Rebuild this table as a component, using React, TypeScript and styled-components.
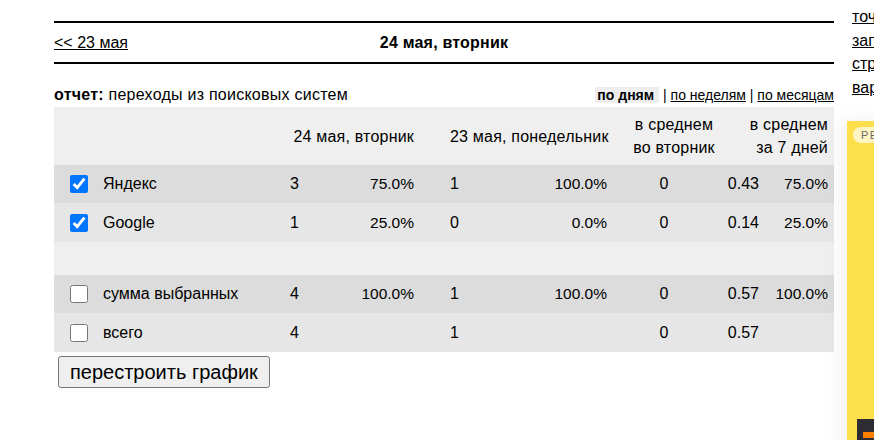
import React from "react";
import styled, { createGlobalStyle } from "styled-components";

const GlobalStyle = createGlobalStyle`
  html, body {
    margin: 0;
    padding: 0;
    overflow: hidden;
    background: #fff;
  }
  body {
    font-family: "Liberation Sans", Arial, sans-serif;
    color: #000;
  }
`;

const Page = styled.div`
  display: flex;
  align-items: flex-start;
  width: 874px;
  height: 440px;
  padding-left: 54px;
  box-sizing: border-box;
  overflow: hidden;
`;

const Main = styled.div`
  width: 780px;
  flex-shrink: 0;
  padding-top: 21px;
`;

const NavBar = styled.div`
  display: grid;
  grid-template-columns: 1fr auto 1fr;
  align-items: center;
  height: 39px;
  border-top: 2px solid #000;
  border-bottom: 2px solid #000;
  font-size: 16px;
`;

const PrevLink = styled.a`
  color: #000;
  text-decoration: underline;
  justify-self: start;
  cursor: pointer;
`;

const DayTitle = styled.div`
  font-weight: bold;
  letter-spacing: 0.2px;
`;

const ReportBar = styled.div`
  display: flex;
  justify-content: space-between;
  align-items: flex-end;
  height: 43px;
  padding-bottom: 3px;
  box-sizing: border-box;
`;

const ReportTitle = styled.div`
  font-size: 16px;
  line-height: 18px;
  letter-spacing: 0.25px;
  b {
    font-weight: bold;
  }
`;

const PeriodSwitch = styled.div`
  font-size: 14px;
  line-height: 16px;
  padding-bottom: 1px;
`;

const PeriodCurrent = styled.span`
  font-weight: bold;
  background: #eeeeee;
  padding: 0 5px 0 2px;
`;

const PeriodLink = styled.a`
  color: #000;
  text-decoration: underline;
  cursor: pointer;
`;

const Table = styled.div`
  display: flex;
  flex-direction: column;
`;

const COLUMNS = "236px 70px 90px 70px 87px 114px 38px 69px";

const Row = styled.div<{ $bg: string; $h: number }>`
  display: grid;
  grid-template-columns: ${COLUMNS};
  padding-right: 6px;
  align-items: center;
  height: ${(p) => p.$h}px;
  background: ${(p) => p.$bg};
  font-size: 16px;
`;

const HeadCell = styled.div<{ $span?: number; $align?: string; $pr?: number; $pl?: number }>`
  grid-column: span ${(p) => p.$span ?? 1};
  text-align: ${(p) => p.$align ?? "right"};
  padding-right: ${(p) => p.$pr ?? 0}px;
  padding-left: ${(p) => p.$pl ?? 0}px;
  line-height: 23px;
  letter-spacing: 0.2px;
  white-space: nowrap;
`;

const LabelCell = styled.label`
  display: flex;
  align-items: center;
  gap: 15px;
  padding-left: 16px;
`;

const Checkbox = styled.input`
  width: 18px;
  height: 18px;
  margin: 0;
  accent-color: #0075ff;
`;

const Cell = styled.div<{ $align?: string; $pr?: number; $small?: boolean }>`
  text-align: ${(p) => p.$align ?? "left"};
  padding-right: ${(p) => p.$pr ?? 0}px;
  font-size: ${(p) => (p.$small ? 15.5 : 16)}px;
  white-space: nowrap;
`;

const RebuildButton = styled.button`
  margin: 4px 0 0 4px;
  height: 32px;
  padding: 0 11px;
  font-family: "Liberation Sans", Arial, sans-serif;
  font-size: 20px;
  color: #000;
  background: #efefef;
  border: 1px solid #767676;
  border-radius: 3px;
`;

const Sidebar = styled.div`
  flex-shrink: 0;
  width: 220px;
  margin-left: 13px;
`;

const SideLinks = styled.div`
  display: flex;
  flex-direction: column;
  padding: 5px 0 0 5px;
  font-size: 16px;
  line-height: 23.5px;
  white-space: nowrap;
`;

const SideLink = styled.a`
  color: #000;
  text-decoration: underline;
  cursor: pointer;
`;

const AdPanel = styled.div`
  margin-top: 22px;
  height: 330px;
  background: #fcdf4b;
  box-shadow: -6px 0 18px rgba(0, 0, 0, 0.06);
  padding: 6px 0 0 6px;
  box-sizing: border-box;
  display: flex;
  flex-direction: column;
  justify-content: space-between;
`;

const AdBadge = styled.div`
  align-self: flex-start;
  background: #fff4c4;
  color: #6b6b6b;
  font-size: 11px;
  letter-spacing: 1.5px;
  line-height: 16px;
  padding: 0 8px;
  border-radius: 8px;
`;

const AdCard = styled.div`
  margin-left: 4px;
  height: 32px;
  background: #2d2c33;
  padding: 13px 0 0 6px;
  box-sizing: border-box;
`;

const AdButton = styled.div`
  width: 60px;
  height: 6px;
  background: #ff7f00;
`;

type DataItem = {
  label: string;
  checked: boolean;
  c1: string;
  p1: string;
  c2: string;
  p2: string;
  avgDay: string;
  avgWeek: string;
  pWeek: string;
  bg: string;
  h: number;
};

const rowsTop: DataItem[] = [
  { label: "Яндекс", checked: true, c1: "3", p1: "75.0%", c2: "1", p2: "100.0%", avgDay: "0", avgWeek: "0.43", pWeek: "75.0%", bg: "#dcdcdc", h: 38 },
  { label: "Google", checked: true, c1: "1", p1: "25.0%", c2: "0", p2: "0.0%", avgDay: "0", avgWeek: "0.14", pWeek: "25.0%", bg: "#e6e6e6", h: 39 },
];

const rowsBottom: DataItem[] = [
  { label: "сумма выбранных", checked: false, c1: "4", p1: "100.0%", c2: "1", p2: "100.0%", avgDay: "0", avgWeek: "0.57", pWeek: "100.0%", bg: "#dcdcdc", h: 38 },
  { label: "всего", checked: false, c1: "4", p1: "", c2: "1", p2: "", avgDay: "0", avgWeek: "0.57", pWeek: "", bg: "#e6e6e6", h: 39 },
];

const DataRow: React.FC<{ item: DataItem }> = ({ item }) => (
  <Row $bg={item.bg} $h={item.h}>
    <LabelCell>
      <Checkbox type="checkbox" defaultChecked={item.checked} />
      <span>{item.label}</span>
    </LabelCell>
    <Cell>{item.c1}</Cell>
    <Cell $align="right" $pr={36} $small>{item.p1}</Cell>
    <Cell>{item.c2}</Cell>
    <Cell $align="right" $small>{item.p2}</Cell>
    <Cell $align="center">{item.avgDay}</Cell>
    <Cell $align="right">{item.avgWeek}</Cell>
    <Cell $align="right" $small>{item.pWeek}</Cell>
  </Row>
);

export default function App() {
  return (
    <>
      <GlobalStyle />
      <Page>
        <Main>
          <NavBar>
            <PrevLink>&lt;&lt; 23 мая</PrevLink>
            <DayTitle>24 мая, вторник</DayTitle>
            <span />
          </NavBar>
          <ReportBar>
            <ReportTitle>
              <b>отчет:</b> переходы из поисковых систем
            </ReportTitle>
            <PeriodSwitch>
              <PeriodCurrent>по дням</PeriodCurrent> | <PeriodLink>по неделям</PeriodLink> |{" "}
              <PeriodLink>по месяцам</PeriodLink>
            </PeriodSwitch>
          </ReportBar>
          <Table>
            <Row $bg="#efefef" $h={58}>
              <HeadCell />
              <HeadCell $span={2} $pr={36}>24 мая, вторник</HeadCell>
              <HeadCell $span={2}>23 мая, понедельник</HeadCell>
              <HeadCell $align="center" $pl={20}>
                в среднем
                <br />
                во вторник
              </HeadCell>
              <HeadCell $span={2}>
                в среднем
                <br />
                за 7 дней
              </HeadCell>
            </Row>
            {rowsTop.map((r) => (
              <DataRow key={r.label} item={r} />
            ))}
            <Row $bg="#efefef" $h={33} />
            {rowsBottom.map((r) => (
              <DataRow key={r.label} item={r} />
            ))}
          </Table>
          <RebuildButton type="button">перестроить график</RebuildButton>
        </Main>
        <Sidebar>
          <SideLinks>
            <SideLink>точки входа</SideLink>
            <SideLink>запросы</SideLink>
            <SideLink>страницы</SideLink>
            <SideLink>варианты</SideLink>
          </SideLinks>
          <AdPanel>
            <AdBadge>РЕКЛАМА</AdBadge>
            <AdCard>
              <AdButton />
            </AdCard>
          </AdPanel>
        </Sidebar>
      </Page>
    </>
  );
}
